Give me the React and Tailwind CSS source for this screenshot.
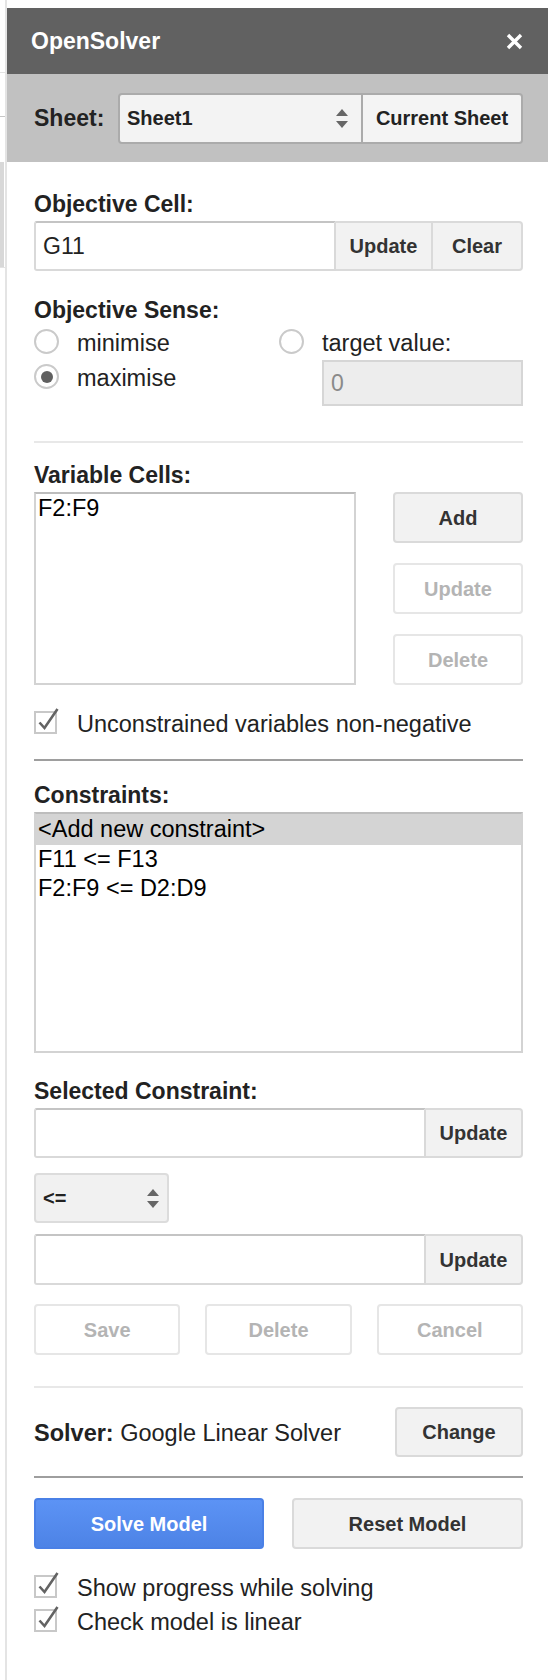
import React from 'react';

const FONT = "font-['Liberation_Sans',Arial,sans-serif]";

function Label({ children, className = '' }) {
  return <div className={`text-[23px] leading-[26px] font-bold text-[#222] ${className}`}>{children}</div>;
}

function Btn({ children, disabled, className = '' }) {
  const tone = disabled
    ? 'bg-white border-[#e6e6e6] text-[#b4b4b4]'
    : 'bg-[#f2f2f2] border-[#dadada] text-[#333]';
  return (
    <div className={`flex items-center justify-center border-2 rounded-[4px] text-[20px] font-bold ${tone} ${className}`}>
      {children}
    </div>
  );
}

function Radio({ checked }) {
  return (
    <span className="w-[25px] h-[25px] rounded-full border-2 border-[#cacaca] bg-white flex items-center justify-center shrink-0">
      {checked && <span className="w-[12px] h-[12px] rounded-full bg-[#606060]" />}
    </span>
  );
}

function Check({ label, className = '' }) {
  return (
    <div className={`flex items-start h-[26px] ${className}`}>
      <svg width="27" height="27" viewBox="0 0 27 27" className="-mt-[4px] shrink-0">
        <rect x="1" y="5" width="21" height="21" fill="white" stroke="#c8c8c8" strokeWidth="2" />
        <path d="M5.5 15.5 L10.5 21 L23.5 2" fill="none" stroke="#636363" strokeWidth="2.6" />
      </svg>
      <span className="ml-[16px] text-[23.5px] leading-[26px] text-[#222]">{label}</span>
    </div>
  );
}

function Arrows({ className = '' }) {
  return (
    <svg width="14" height="21" viewBox="0 0 14 21" className={className}>
      <path d="M1 8 L7 1 L13 8 Z" fill="#666" />
      <path d="M1 13 L7 20 L13 13 Z" fill="#666" />
    </svg>
  );
}

function InputRow({ buttons, className = '' }) {
  return (
    <div className={`flex h-[50px] ${className}`}>
      <div className="flex-1 bg-white border-2 border-[#d9d9d9] border-t-[#c4c4c4] rounded-l-[3px]" />
      {buttons}
    </div>
  );
}

export default function App() {
  return (
    <div className={`flex w-[552px] h-[1680px] bg-white ${FONT} text-[#222]`}>
      <div className="w-[5px] shrink-0 flex flex-col">
        <div className="h-[72px]" />
        <div className="h-[1px] bg-[#e3e3e3]" />
        <div className="h-[43px]" />
        <div className="h-[1px] bg-[#c6c6c6]" />
        <div className="h-[45px]" />
        <div className="h-[105px] w-[4px] bg-[#d8d8d8]" />
        <div className="h-[1px] bg-[#e3e3e3]" />
      </div>

      <div className="w-[543px] shrink-0 border-l-2 border-[#e4e4e4] flex flex-col">
        <div className="mt-[8px] h-[66px] bg-[#616161] flex items-center justify-between pl-[24px] pr-[25px]">
          <span className="text-white text-[23px] font-bold leading-[26px]">OpenSolver</span>
          <svg width="17" height="17" viewBox="0 0 17 17">
            <path d="M2 2 L15 15 M15 2 L2 15" stroke="white" strokeWidth="3.4" />
          </svg>
        </div>

        <div className="h-[88px] bg-[#c1c1c1] flex items-center pl-[27px] pr-[25px]">
          <span className="text-[23px] font-bold leading-[26px] text-[#222] w-[84px]">Sheet:</span>
          <div className="flex h-[51px] flex-1">
            <div className="w-[245px] flex items-center justify-between pl-[7px] pr-[12px] bg-[#f3f3f3] border-2 border-[#ababab] rounded-l-[4px] text-[20px] font-bold text-[#222]">
              <span>Sheet1</span>
              <Arrows />
            </div>
            <div className="flex-1 flex items-center justify-center bg-[#f4f4f4] border-y-2 border-r-2 border-[#ababab] rounded-r-[4px] text-[20px] font-bold text-[#222]">
              Current Sheet
            </div>
          </div>
        </div>

        <div className="pl-[27px] pr-[25px] flex flex-col">
          <Label className="mt-[29px]">Objective Cell:</Label>
          <div className="mt-[4px] flex h-[50px]">
            <div className="flex-1 flex items-center pl-[7px] bg-white border-2 border-[#d9d9d9] border-t-[#c4c4c4] rounded-l-[3px] text-[23px] text-[#222]">
              G11
            </div>
            <div className="w-[97px] flex items-center justify-center bg-[#f2f2f2] border-y-2 border-r-2 border-[#dadada] text-[20px] font-bold text-[#333]">
              Update
            </div>
            <div className="w-[90px] flex items-center justify-center bg-[#f2f2f2] border-y-2 border-r-2 border-[#dadada] rounded-r-[4px] text-[20px] font-bold text-[#333]">
              Clear
            </div>
          </div>

          <Label className="mt-[26px]">Objective Sense:</Label>
          <div className="mt-[1px] flex">
            <div className="w-[245px] flex flex-col">
              <div className="h-[35px] flex items-center">
                <Radio />
                <span className="ml-[18px] text-[23.5px] leading-[26px] pt-[3px]">minimise</span>
              </div>
              <div className="h-[35px] flex items-center">
                <Radio checked />
                <span className="ml-[18px] text-[23.5px] leading-[26px] pt-[3px]">maximise</span>
              </div>
            </div>
            <div className="flex-1 flex flex-col">
              <div className="h-[35px] flex items-center">
                <Radio />
                <span className="ml-[18px] text-[23.5px] leading-[26px] pt-[3px]">target value:</span>
              </div>
              <div className="mt-[1px] ml-[43px] h-[46px] flex items-center pl-[7px] bg-[#ededed] border-2 border-[#d6d6d6] text-[23px] text-[#8a8a8a]">
                0
              </div>
            </div>
          </div>

          <div className="mt-[35px] h-[2px] bg-[#e8e8e8]" />

          <Label className="mt-[19px]">Variable Cells:</Label>
          <div className="mt-[4px] flex justify-between">
            <div className="w-[322px] h-[193px] border-2 border-[#d3d3d3] border-t-[#bdbdbd] bg-white pl-[2px] text-[23.5px] leading-[29px] text-black">
              F2:F9
            </div>
            <div className="w-[130px] flex flex-col gap-[20px]">
              <Btn className="h-[51px]">Add</Btn>
              <Btn disabled className="h-[51px]">Update</Btn>
              <Btn disabled className="h-[51px]">Delete</Btn>
            </div>
          </div>

          <Check className="mt-[26px]" label="Unconstrained variables non-negative" />

          <div className="mt-[22px] h-[2px] bg-[#9e9e9e]" />

          <Label className="mt-[21px]">Constraints:</Label>
          <div className="mt-[4px] h-[241px] border-2 border-[#d3d3d3] border-t-[#bdbdbd] bg-white text-[23.5px] leading-[29.5px] text-black">
            <div className="bg-[#d4d4d4] pl-[2px] pt-[1px]">&lt;Add new constraint&gt;</div>
            <div className="pl-[2px]">F11 &lt;= F13</div>
            <div className="pl-[2px]">F2:F9 &lt;= D2:D9</div>
          </div>

          <Label className="mt-[25px]">Selected Constraint:</Label>
          <InputRow
            className="mt-[4px]"
            buttons={
              <div className="w-[97px] flex items-center justify-center bg-[#f2f2f2] border-y-2 border-r-2 border-[#dadada] rounded-r-[4px] text-[20px] font-bold text-[#333]">
                Update
              </div>
            }
          />

          <div className="mt-[15px] w-[135px] h-[50px] flex items-center justify-between pl-[7px] pr-[7px] bg-[#f1f1f1] border-2 border-[#dcdcdc] rounded-[4px] text-[20px] font-bold text-[#222]">
            <span>&lt;=</span>
            <Arrows />
          </div>

          <InputRow
            className="mt-[11px] h-[51px]"
            buttons={
              <div className="w-[97px] flex items-center justify-center bg-[#f2f2f2] border-y-2 border-r-2 border-[#dadada] rounded-r-[4px] text-[20px] font-bold text-[#333]">
                Update
              </div>
            }
          />

          <div className="mt-[19px] grid grid-cols-3 gap-[25px]">
            <Btn disabled className="h-[51px]">Save</Btn>
            <Btn disabled className="h-[51px]">Delete</Btn>
            <Btn disabled className="h-[51px]">Cancel</Btn>
          </div>

          <div className="mt-[31px] h-[2px] bg-[#e8e8e8]" />

          <div className="mt-[19px] flex items-center justify-between">
            <span className="text-[23.5px] leading-[26px] pt-[2px]">
              <span className="font-bold">Solver:</span> Google Linear Solver
            </span>
            <Btn className="w-[128px] h-[50px]">Change</Btn>
          </div>

          <div className="mt-[19px] h-[2px] bg-[#9e9e9e]" />

          <div className="mt-[20px] flex justify-between">
            <div className="w-[230px] h-[51px] flex items-center justify-center rounded-[4px] border-2 border-[#4a80e6] bg-linear-to-b from-[#5c93f5] to-[#4d83e6] text-white text-[20px] font-bold">
              Solve Model
            </div>
            <Btn className="w-[231px] h-[51px]">Reset Model</Btn>
          </div>

          <Check className="mt-[26px]" label="Show progress while solving" />
          <Check className="mt-[8px]" label="Check model is linear" />
        </div>
      </div>

      <div className="w-[4px] shrink-0" />
    </div>
  );
}
